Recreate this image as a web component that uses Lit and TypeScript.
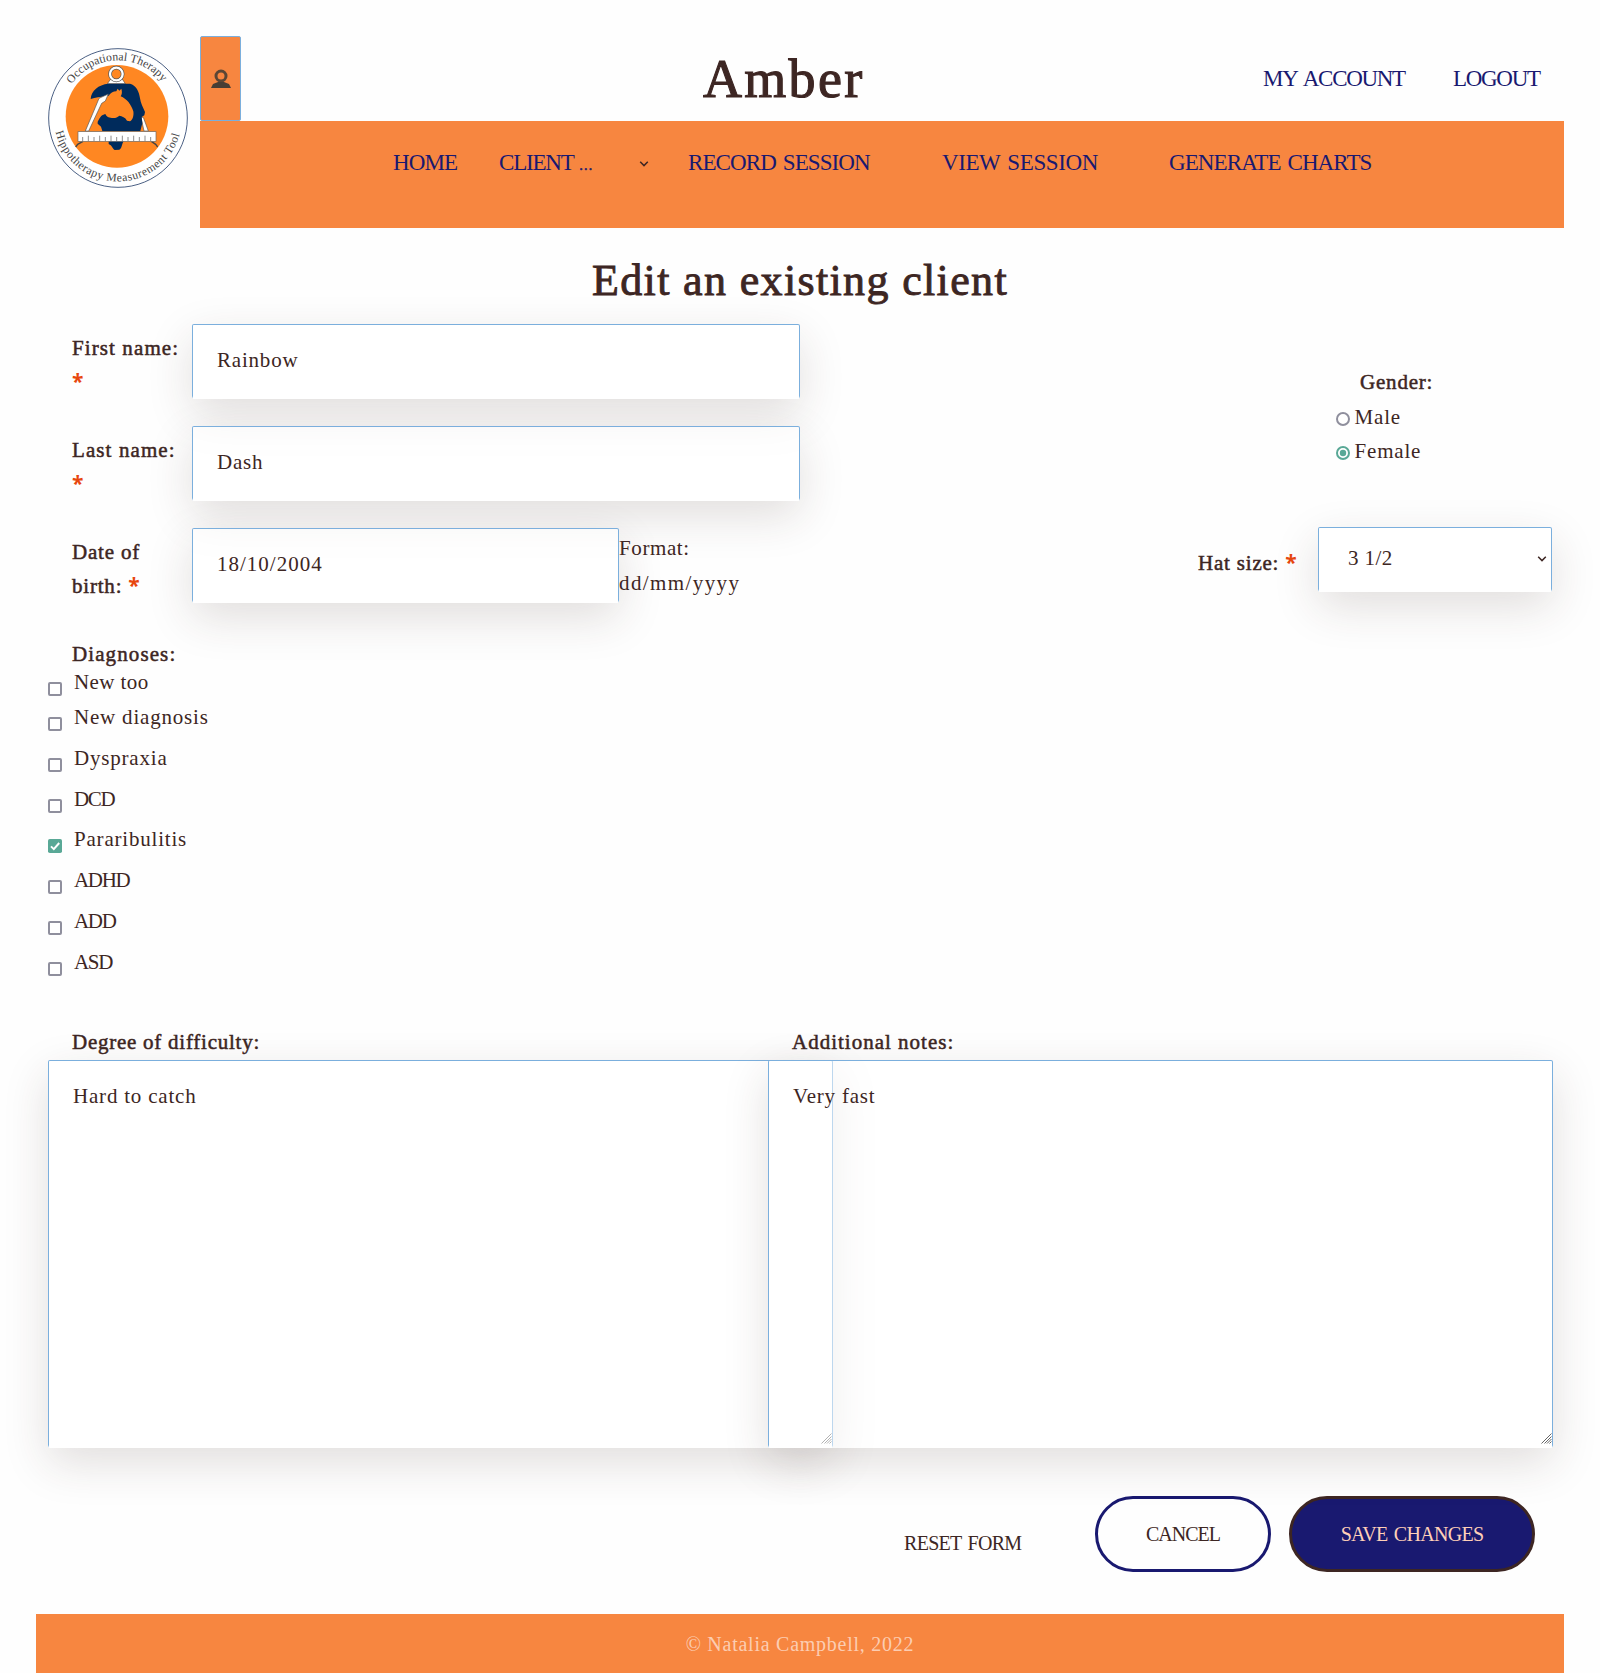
import { LitElement, html, css, svg } from "lit";
import { customElement } from "lit/decorators.js";

const DIAGNOSES = [
  { name: "New too", on: false, caps: false },
  { name: "New diagnosis", on: false, caps: false },
  { name: "Dyspraxia", on: false, caps: false },
  { name: "DCD", on: false, caps: true },
  { name: "Pararibulitis", on: true, caps: false },
  { name: "ADHD", on: false, caps: true },
  { name: "ADD", on: false, caps: true },
  { name: "ASD", on: false, caps: true },
];

const TICKS = Array.from({ length: 13 }, (_, i) => 158 + i * 17);

@customElement("app-logo")
export class AppLogo extends LitElement {
  static styles = css`
    :host { display: block; width: 140px; height: 140px; }
    svg { display: block; }
    text { font-family: "Liberation Serif", serif; font-size: 35px; fill: #444; }
    .arc-top { letter-spacing: 0.2px; }
    .arc-bottom { letter-spacing: 1.6px; }
  `;
  render() {
    return html`<svg width="140" height="140" viewBox="54 54 420 420">
      <defs>
        <path id="top" d="M 125 163 A 170 170 0 0 1 430 225" />
        <path id="bottom" d="M 76.8 305 A 192 192 0 0 0 456 264" />
      </defs>
      <circle cx="264" cy="264" r="208" fill="#fff" stroke="#1d3764" stroke-width="2.4" />
      <circle cx="261" cy="259" r="154" fill="#ff8722" />
      <text class="arc-top"><textPath href="#top">Occupational Therapy</textPath></text>
      <text class="arc-bottom"><textPath href="#bottom">Hippotherapy Measurement Tool</textPath></text>
      <path d="M243 146 L232 161 L286 161 L276 146 Z" fill="#fff" stroke="#555" stroke-width="2" />
      <circle cx="259" cy="132" r="19" fill="#ff8722" stroke="#555" stroke-width="11" />
      <circle cx="259" cy="132" r="19" fill="none" stroke="#fff" stroke-width="7" />
      <path d="M333 262 L340 262 L355 303 L342 303 Z" fill="#fff" stroke="#555" stroke-width="2" />
      <path d="M182 207 C184 182 205 164 235 161 L300 161 C318 165 328 185 330 205 C332 220 339 232 345 246 L343 256 L335 261 L337 280 L331 303 L217 303 L213 290 L203 281 L203 275 C210 260 217 253 225 252 L226 200 C212 200 196 201 182 207 Z" fill="#002b5c" />
      <path d="M222 200 L236 197 C240 190 250 184 259 184 L263 176 L268 182 L274 176 C277 186 276 192 272 199 C290 206 304 224 310 244 C312 258 308 270 300 274 L291 272 C286 262 276 258 268 257 C262 262 258 264 250 264 C238 264 231 262 226 252 L208 255 Z" fill="#ff8722" />
      <path d="M207 205 L235 192 L226 213 L215 220 L176 303 L166 303 L196 232 Z" fill="#fff" stroke="#555" stroke-width="2" />
      <path d="M236 333 L281 333 C275 342 276 355 268 359 L254 360 C245 353 247 347 236 342 Z" fill="#002b5c" />
      <path d="M159 334 L143 343 L137 351 M364 334 L377 343 L383 351" fill="none" stroke="#444" stroke-width="4" />
      <rect x="144" y="305" width="234" height="29" fill="#fff" stroke="#666" stroke-width="2" />
      ${TICKS.map((x, i) => svg`<path d="M${x} 333 V${i % 2 ? 317 : 321}" stroke="#555" stroke-width="2"/>`)}
    </svg>`;
  }
}

@customElement("app-root")
export class AppRoot extends LitElement {
  static styles = css`
    :host {
      display: block; box-sizing: border-box; width: 1600px; height: 1673px; padding: 36px 36px 0;
      overflow: hidden; background: #fefefe; color: #3d2623;
      font: 21px/34px "Liberation Serif", "Times New Roman", serif; letter-spacing: 0.8px;
    }
    * { box-sizing: border-box; }
    h1, h2 { margin: 0; font-weight: 400; }
    a { color: #191970; text-decoration: none; }
    header { display: grid; grid-template-columns: 164px 1fr; }
    .brand { padding: 12px; }
    .top { display: flex; height: 85px; line-height: 85px; font-size: 23px; letter-spacing: -1.3px; word-spacing: 3px; }
    .tile {
      width: 41px; height: 85px; padding: 0; border: 1px solid #7bafdd; border-radius: 2px; background: #f78640;
      display: flex; align-items: center; justify-content: center;
    }
    .tile svg { filter: blur(0.7px); }
    h1 { padding-left: 462px; width: 1022px; font-size: 54px; line-height: 86px; letter-spacing: 2.3px; -webkit-text-stroke: 1.1px #3d2623; }
    .account { width: 190px; }
    nav {
      height: 107px; padding-left: 193px; background: #f78640; font-size: 23px; line-height: 84px; letter-spacing: -0.9px; word-spacing: 2px;
      display: grid; grid-template-columns: 106px 140px 49px 254px 227px auto; white-space: nowrap;
    }
    nav svg { margin-top: 38px; }
    .client { letter-spacing: -1.2px; }
    .dots { font-size: 14px; letter-spacing: 0; margin-left: -1px; -webkit-text-stroke: 0.5px #191970; }
    .view { letter-spacing: -0.4px; }
    .charts { letter-spacing: -0.9px; }
    h2 { height: 96px; padding-top: 9px; line-height: 88px; text-align: center; font-size: 44px; letter-spacing: 1.35px; -webkit-text-stroke: 0.9px #3d2623; }
    .label { -webkit-text-stroke: 0.5px currentColor; }
    .req { color: #e8470e; font: 700 21px/20px "Open Sans", sans-serif; letter-spacing: 0; -webkit-text-stroke: 0; vertical-align: 0; }
    .fields { display: grid; grid-template-columns: 764px 1fr; height: 313px; }
    .row { display: flex; height: 102px; }
    .row .label { width: 156px; padding: 7px 0 0 36px; }
    .row .label.first { letter-spacing: 1.1px; }
    input.text, textarea, .select {
      font: inherit; letter-spacing: inherit; color: inherit; outline: none; margin: 0;
      border: 1px solid #7bafdd; border-bottom: 3px solid transparent; border-radius: 2px;
      background: rgba(255, 255, 255, 0.5); box-shadow: 0 15px 45px rgba(61, 38, 35, 0.15);
    }
    input.text { width: 608px; height: 75px; padding: 1px 24px; }
    input.dob { width: 427px; letter-spacing: 1px; }
    .format { padding-top: 3px; line-height: 35px; letter-spacing: 0.6px; }
    .format .mask { letter-spacing: 1.4px; }
    .gender { padding: 41px 0 0 535px; height: 203px; }
    .gender .label { padding-left: 25px; }
    .radio { display: flex; gap: 5px; padding-left: 0.6px; }
    .radio svg { margin-top: 13px; }
    .radio span { position: relative; top: 1px; }
    .hat { display: flex; }
    .hat .label { width: 120px; margin-left: 398px; padding-top: 19px; }
    .select { width: 234px; height: 65px; padding: 10px 4px 0 29px; line-height: 40px; letter-spacing: 0.4px; display: flex; justify-content: space-between; }
    .select svg { margin-top: 16px; }
    .diagnoses { height: 388px; }
    .diagnoses .label { height: 28px; padding-left: 36px; letter-spacing: 1.1px; }
    .check { display: flex; height: 40.8px; padding-left: 12px; gap: 12px; }
    .check.short { height: 35px; letter-spacing: 0.4px; }
    .check svg { margin-top: 17px; }
    .caps { letter-spacing: -1.3px; }
    .notes { display: grid; grid-template-columns: 720px 720px; padding-left: 12px; height: 423px; }
    .notes .label { height: 35px; padding-left: 24px; letter-spacing: 0.75px; }
    .notes .label.wide { letter-spacing: 1px; }
    .area { position: relative; width: 785px; height: 388px; }
    textarea { display: block; resize: none; width: 785px; height: 388px; padding: 18px 24px; }
    .grip { position: absolute; right: 1px; bottom: 4px; }
    .actions { display: flex; height: 166px; padding: 48px 0 0 868px; font-size: 20px; letter-spacing: -0.7px; word-spacing: 2px; }
    .reset { width: 191px; padding-top: 30px; color: inherit; }
    .btn { font: inherit; letter-spacing: inherit; word-spacing: inherit; height: 76px; padding: 0; border: 3px solid #191970; border-radius: 38px; color: inherit; background: #fefefe; }
    .cancel { width: 176px; letter-spacing: -1px; }
    .save { width: 246px; margin-left: 18px; color: #ffd0b8; background: #191970; border-color: #3d2623; }
    footer { height: 59px; line-height: 61px; background: #f78640; color: #fccdb2; text-align: center; font-size: 20px; letter-spacing: 0.75px; }
  `;

  chevron() {
    return html`<svg width="10" height="10" viewBox="0 0 10 10"><path d="M1.2 2.8 L5 6.6 L8.8 2.8" fill="none" stroke="#3d2623" stroke-width="1.5" /></svg>`;
  }

  grip() {
    return html`<svg class="grip" width="11" height="11" viewBox="0 0 11 11">
      <path d="M0.5 10.5 L10.5 0.5 M3.5 10.5 L10.5 3.5 M6 10.5 L10.5 6 M8.5 10.5 L10.5 8.5" fill="none" stroke="#555" stroke-width="0.9" /></svg>`;
  }

  radio(name: string, on: boolean) {
    const c = on ? "#59a896" : "#8f8f9d";
    return html`<label class="radio"><svg width="14" height="14" viewBox="0 0 14 14">
      <circle cx="7" cy="7" r="6" fill="#fff" stroke=${c} stroke-width="2" />
      ${on ? svg`<circle cx="7" cy="7" r="3.2" fill=${c} />` : ""}</svg><span>${name}</span></label>`;
  }

  render() {
    return html`
      <header>
        <div class="brand"><app-logo></app-logo></div>
        <div>
          <div class="top">
            <button class="tile"><svg width="22" height="22" viewBox="0 0 22 22">
              <circle cx="11" cy="8" r="5" fill="none" stroke="#5b4635" stroke-width="3" />
              <path d="M1 20 L3 16 L8 14 H14 L19 16 L21 20 Z" fill="#473e35" /></svg></button>
            <h1>Amber</h1>
            <a class="account" href="#">MY ACCOUNT</a><a href="#">LOGOUT</a>
          </div>
          <nav>
            <a href="#">HOME</a><a class="client" href="#">CLIENT <span class="dots">…</span></a>${this.chevron()}
            <a href="#">RECORD SESSION</a><a class="view" href="#">VIEW SESSION</a><a class="charts" href="#">GENERATE CHARTS</a>
          </nav>
        </div>
      </header>
      <h2>Edit an existing client</h2>
      <div class="fields">
        <div>
          <div class="row"><label class="label first">First name: <span class="req">*</span></label><input class="text" .value=${"Rainbow"} /></div>
          <div class="row"><label class="label first">Last name: <span class="req">*</span></label><input class="text" .value=${"Dash"} /></div>
          <div class="row"><label class="label">Date of<br />birth: <span class="req">*</span></label><input class="text dob" .value=${"18/10/2004"} /><div class="format">Format:<br /><span class="mask">dd/mm/yyyy</span></div></div>
        </div>
        <div>
          <div class="gender"><div class="label">Gender:</div>${this.radio("Male", false)}${this.radio("Female", true)}</div>
          <div class="hat"><div class="label">Hat size: <span class="req">*</span></div><div class="select"><span>3 1/2</span>${this.chevron()}</div></div>
        </div>
      </div>
      <div class="diagnoses">
        <div class="label">Diagnoses:</div>
        ${DIAGNOSES.map((d, i) => html`<label class="check ${i === 0 ? "short" : ""}">
          <svg width="14" height="14" viewBox="0 0 14 14">${d.on
            ? svg`<rect width="14" height="14" rx="1.8" fill="#59a896" /><path d="M3 7.4 L5.8 10.1 L11.2 4" fill="none" stroke="#fff" stroke-width="2" />`
            : svg`<rect x="1" y="1" width="12" height="12" rx="1" fill="#fff" stroke="#8f8f9d" stroke-width="2" />`}</svg>
          <span class=${d.caps ? "caps" : ""}>${d.name}</span></label>`)}
      </div>
      <div class="notes">
        <div><div class="label">Degree of difficulty:</div><div class="area"><textarea .value=${"Hard to catch"}></textarea>${this.grip()}</div></div>
        <div><div class="label wide">Additional notes:</div><div class="area"><textarea .value=${"Very fast"}></textarea>${this.grip()}</div></div>
      </div>
      <div class="actions">
        <a class="reset" href="#">RESET FORM</a><button class="btn cancel">CANCEL</button><button class="btn save">SAVE CHANGES</button>
      </div>
      <footer>© Natalia Campbell, 2022</footer>
    `;
  }
}
